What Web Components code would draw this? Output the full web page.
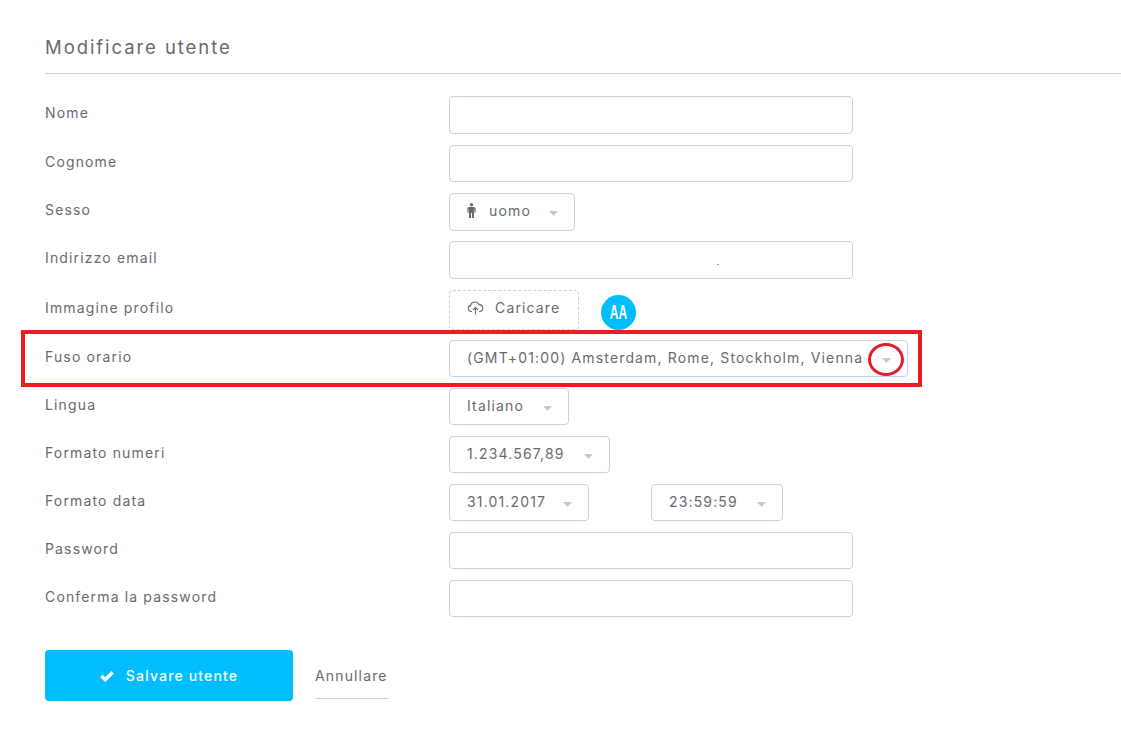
<!DOCTYPE html>
<html>
<head>
<meta charset="utf-8">
<style>
  html, body { margin: 0; background: #fff; }
  body { font-family: Inter, "Liberation Sans", sans-serif; color: #6b6870; }
</style>
</head>
<body>
<user-form></user-form>

<script>
const ARROW = `<svg width="9" height="5" viewBox="0 0 9 5"><path d="M0 0h9L4.5 5z" fill="#c3c8d0"/></svg>`;

class FormRow extends HTMLElement {
  constructor() {
    super();
    this.attachShadow({mode: 'open'}).innerHTML = `
      <style>
        :host { display: grid; grid-template-columns: 404px 1fr; align-items: center; height: var(--h, 37px); }
        .label { font-size: 14px; letter-spacing: 1.15px; color: #6b6870; position: relative; top: var(--label-top, -2px); }
        .field { display: flex; align-items: stretch; height: 100%; }
      </style>
      <div class="label"><slot name="label"></slot></div>
      <div class="field"><slot></slot></div>
    `;
  }
}

class TextBox extends HTMLElement {
  constructor() {
    super();
    this.attachShadow({mode: 'open'}).innerHTML = `
      <style>
        :host { display: block; width: 404px; box-sizing: border-box;
                border: 1px solid #c9d1dd; border-radius: 4px; background: #fff; }
      </style>
      <slot></slot>
    `;
  }
}

class SelectBox extends HTMLElement {
  constructor() {
    super();
    this.attachShadow({mode: 'open'}).innerHTML = `
      <style>
        :host { display: flex; align-items: center; box-sizing: border-box; padding: 0 16px 0 17px;
                border: 1px solid #c9d1dd; border-radius: 4px; background: #fff;
                font-size: 14px; letter-spacing: 1.15px; color: #6b6870; white-space: nowrap; }
        .text { display: flex; align-items: center; position: relative; top: var(--text-top, -1px); }
        .arrow { display: flex; margin-left: auto; margin-top: 3px; }
      </style>
      <span class="text"><slot></slot></span>
      <span class="arrow">${ARROW}</span>
    `;
  }
}

class UploadBox extends HTMLElement {
  constructor() {
    super();
    this.attachShadow({mode: 'open'}).innerHTML = `
      <style>
        :host { display: flex; align-items: center; gap: 11px; width: 130px; box-sizing: border-box;
                padding-left: 17px; border: 1px dashed #c9d1dd; border-radius: 4px;
                font-size: 14px; letter-spacing: 1.15px; color: #6b6870; white-space: nowrap; }
        svg { display: block; margin-top: -4px; }
        span { position: relative; top: -3px; }
      </style>
      <svg width="17" height="14" viewBox="0 0 17 14" fill="none" stroke="#6b6870" stroke-width="1.1">
        <path d="M5 10.5H4A3 3 0 0 1 3.5 4.6 4.5 4.5 0 0 1 12 3.6 3.5 3.5 0 0 1 13 10.5h-1"/>
        <path d="M8.5 13.5V7M6 9l2.5-2.5L11 9"/>
      </svg>
      <span><slot></slot></span>
    `;
  }
}

class AvatarBadge extends HTMLElement {
  constructor() {
    super();
    this.attachShadow({mode: 'open'}).innerHTML = `
      <style>
        :host { display: flex; align-items: center; justify-content: center; width: 35px; height: 35px; border-radius: 50%;
                background: #00bdff; color: #fff; font: 700 20px "Liberation Sans", sans-serif;
                margin-left: 22px; margin-top: 5px; }
        span { display: inline-block; transform: scaleX(.6); }
      </style>
      <span><slot></slot></span>
    `;
  }
}

class SaveButton extends HTMLElement {
  constructor() {
    super();
    this.attachShadow({mode: 'open'}).innerHTML = `
      <style>
        :host { display: flex; align-items: center; justify-content: center; gap: 12px; width: 248px; height: 51px;
                border-radius: 4px; background: #00bdff; color: #fff; font-size: 14px; font-weight: 500; letter-spacing: 1.15px; }
      </style>
      <svg width="14" height="12" viewBox="0 0 14 12"><path d="M1.4 6l3.8 3.8L12.6 2.2" fill="none" stroke="#fff" stroke-width="3.4"/></svg>
      <slot></slot>
    `;
  }
}

class UserForm extends HTMLElement {
  constructor() {
    super();
    this.attachShadow({mode: 'open'}).innerHTML = `
      <style>
        :host { display: block; padding: 34px 0 0 45px; position: relative; }
        h1 { margin: 0; height: 39px; font-size: 18.5px; font-weight: 400; letter-spacing: 1.93px; color: #6b6870; line-height: 26px; border-bottom: 1px solid #c9d1dd; }
        .rows { display: flex; flex-direction: column; gap: 11px; margin-top: 22px; }
        .highlight { position: absolute; left: 21px; top: 330px; width: 901px; height: 57px; box-sizing: border-box; border: 4px solid #ec1c24; pointer-events: none; }
        .ring { position: absolute; left: 868px; top: 343px; width: 36px; height: 33px; box-sizing: border-box; border: 3px solid #e01e2e; border-radius: 50%; pointer-events: none; }
        .speck { position: absolute; left: 717px; top: 264px; width: 2px; height: 1px; background: #9aa0a8; }
        .time { margin-left: 62px; }
        .actions { display: flex; align-items: flex-start; margin-top: 33px; }
        .cancel { margin-left: 22px; display: block; height: 49px; box-sizing: border-box; padding-top: 17px; width: 74px; font-size: 14px; letter-spacing: 1.15px; color: #6b6870; border-bottom: 1px solid #c9d1dd; white-space: nowrap; }
      </style>
      <h1>Modificare utente</h1>
      <div class="rows">
        <form-row style="--h:38px;--label-top:-3px"><span slot="label">Nome</span><text-box></text-box></form-row>
        <form-row><span slot="label">Cognome</span><text-box></text-box></form-row>
        <form-row style="--h:38px;--label-top:-3px"><span slot="label">Sesso</span>
          <select-box style="width:126px;--text-top:-2px">
            <svg width="9" height="15" viewBox="0 0 9 15" style="margin-right:13px"><circle cx="4.5" cy="1.7" r="1.7" fill="#6b6870"/><path d="M2 4h5a1.6 1.6 0 0 1 1.6 1.6V9.4H7.4V6H7v9H5V10H4v5H2V6h-.4v3.4H.4V5.6A1.6 1.6 0 0 1 2 4z" fill="#6b6870"/></svg>uomo
          </select-box></form-row>
        <form-row style="--h:38px;--label-top:-3px;margin-top:-1px"><span slot="label">Indirizzo email</span><text-box></text-box></form-row>
        <form-row style="--label-top:-3px"><span slot="label">Immagine profilo</span><upload-box>Caricare</upload-box><avatar-badge>AA</avatar-badge></form-row>
        <form-row style="margin-top:2px"><span slot="label">Fuso orario</span><select-box style="width:459px">(GMT+01:00) Amsterdam, Rome, Stockholm, Vienna</select-box></form-row>
        <form-row><span slot="label">Lingua</span><select-box style="width:120px">Italiano</select-box></form-row>
        <form-row><span slot="label">Formato numeri</span><select-box style="width:161px">1.234.567,89</select-box></form-row>
        <form-row><span slot="label">Formato data</span><select-box style="width:140px">31.01.2017</select-box><select-box class="time" style="width:132px">23:59:59</select-box></form-row>
        <form-row><span slot="label">Password</span><text-box></text-box></form-row>
        <form-row><span slot="label">Conferma la password</span><text-box></text-box></form-row>
      </div>
      <div class="actions">
        <save-button>Salvare utente</save-button>
        <span class="cancel">Annullare</span>
      </div>
      <div class="speck"></div>
      <div class="highlight"></div>
      <div class="ring"></div>
    `;
  }
}

customElements.define('form-row', FormRow);
customElements.define('text-box', TextBox);
customElements.define('select-box', SelectBox);
customElements.define('upload-box', UploadBox);
customElements.define('avatar-badge', AvatarBadge);
customElements.define('save-button', SaveButton);
customElements.define('user-form', UserForm);
</script>
</body>
</html>
